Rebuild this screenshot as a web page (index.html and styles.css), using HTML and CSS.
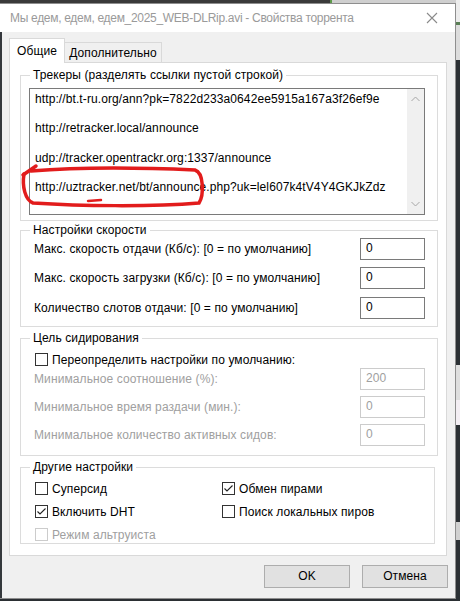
FILE: index.html
```html
<!DOCTYPE html>
<html lang="ru">
<head>
<meta charset="utf-8">
<title>Свойства торрента</title>
<link rel="stylesheet" href="styles.css">
</head>
<body>
<div class="screen">
  <div class="main">
    <div class="topstrip"></div>
    <div class="window">
      <div class="titlebar">
        <span class="title">Мы едем, едем, едем_2025_WEB-DLRip.avi - Свойства торрента</span>
        <svg class="close" width="12" height="12" viewBox="0 0 12 12"><path d="M1 1 L11 11 M11 1 L1 11" stroke="#8a8a8a" stroke-width="1.1" fill="none"/></svg>
      </div>
      <div class="client">
        <div class="tabs">
          <div class="tab active">Общие</div>
          <div class="tab">Дополнительно</div>
        </div>
        <div class="page">
          <fieldset class="group g1">
            <legend>Трекеры (разделять ссылки пустой строкой)</legend>
            <div class="gbody">
              <div class="textarea">
                <div class="tlines">
                  <div>http://bt.t-ru.org/ann?pk=7822d233a0642ee5915a167a3f26ef9e</div>
                  <div>&nbsp;</div>
                  <div>http://retracker.local/announce</div>
                  <div>&nbsp;</div>
                  <div>udp://tracker.opentrackr.org:1337/announce</div>
                  <div>&nbsp;</div>
                  <div>http://uztracker.net/bt/announce.php?uk=lel607k4tV4Y4GKJkZdz</div>
                </div>
                <div class="vscroll">
                  <svg width="9" height="6" viewBox="0 0 9 6"><path d="M0.5 5 L4.5 1 L8.5 5" stroke="#a6a6a6" fill="none"/></svg>
                  <svg width="9" height="6" viewBox="0 0 9 6"><path d="M0.5 1 L4.5 5 L8.5 1" stroke="#a6a6a6" fill="none"/></svg>
                </div>
              </div>
            </div>
          </fieldset>

          <fieldset class="group g2">
            <legend>Настройки скорости</legend>
            <div class="gbody rows">
              <div class="row"><span>Макс. скорость отдачи (Кб/с): [0 = по умолчанию]</span><div class="input">0</div></div>
              <div class="row"><span>Макс. скорость загрузки (Кб/с): [0 = по умолчанию]</span><div class="input">0</div></div>
              <div class="row r3"><span>Количество слотов отдачи: [0 = по умолчанию]</span><div class="input">0</div></div>
            </div>
          </fieldset>

          <fieldset class="group g3">
            <legend>Цель сидирования</legend>
            <div class="gbody rows">
              <label class="check first"><span class="box"></span><span>Переопределить настройки по умолчанию:</span></label>
              <div class="row dis"><span>Минимальное соотношение (%):</span><div class="input">200</div></div>
              <div class="row dis"><span>Минимальное время раздачи (мин.):</span><div class="input">0</div></div>
              <div class="row dis"><span>Минимальное количество активных сидов:</span><div class="input">0</div></div>
            </div>
          </fieldset>

          <fieldset class="group g4">
            <legend>Другие настройки</legend>
            <div class="gbody checks">
              <label class="check"><span class="box"></span><span>Суперсид</span></label>
              <label class="check"><span class="box"><svg width="11" height="11" viewBox="0 0 11 11"><path d="M1.5 5.5 L4 8 L9.5 2.5" stroke="#222" stroke-width="1.1" fill="none"/></svg></span><span>Обмен пирами</span></label>
              <label class="check"><span class="box"><svg width="11" height="11" viewBox="0 0 11 11"><path d="M1.5 5.5 L4 8 L9.5 2.5" stroke="#222" stroke-width="1.1" fill="none"/></svg></span><span>Включить DHT</span></label>
              <label class="check"><span class="box"></span><span>Поиск локальных пиров</span></label>
              <label class="check disabled"><span class="box"></span><span>Режим альтруиста</span></label>
            </div>
          </fieldset>
        </div>
        <div class="buttons">
          <div class="btn">OK</div>
          <div class="btn">Отмена</div>
        </div>
      </div>
    </div>
    <div class="bottomstrip"></div>
  </div>
  <div class="side">
    <div class="s1"></div><div class="s2"></div><div class="s3"></div><div class="s4"></div>
    <div class="s5"></div><div class="s6"></div><div class="s7"></div><div class="s8"></div><div class="s9"></div>
  </div>
  <svg class="annot" width="460" height="601" viewBox="0 0 460 601">
    <path d="M23 175 L36 166" stroke="#e21c1c" stroke-width="3.5" fill="none" stroke-linecap="round"/>
    <path d="M31 171 C80 167 150 168 195 170 C204 173 204 195 199 203 C150 207 80 206 33 203 C25 200 22 186 24 174" stroke="#e21c1c" stroke-width="3.5" fill="none" stroke-linecap="round"/>
    <path d="M88 201 L101 200" stroke="#e21c1c" stroke-width="2.5" fill="none" stroke-linecap="round"/>
  </svg>
</div>
</body>
</html>
```

FILE: styles.css
```css
* { box-sizing: border-box; }
html, body { margin: 0; padding: 0; }
body {
  width: 460px;
  height: 601px;
  overflow: hidden;
  background: #2b3034;
  font-family: "Liberation Sans", Arial, sans-serif;
  font-size: 12px;
  letter-spacing: 0.1px;
  color: #000;
}
.screen { position: relative; display: flex; height: 601px; }
.main { width: 456px; display: flex; flex-direction: column; }
.topstrip {
  height: 3px;
  background: linear-gradient(to right, #3a3a3a 0 330px, #5d9a4a 330px 332px, #cfcfcf 332px);
}
.bottomstrip { flex: 1; background: #2b2f33; }
.window {
  height: 596px;
  background: #f0f0f0;
  border: 1px solid #8e8e8e;
  border-left: none;
  display: flex;
  flex-direction: column;
}
.titlebar {
  height: 28px;
  background: #fff;
  display: flex;
  align-items: center;
  justify-content: space-between;
  padding: 0 17px 0 10px;
  color: #9a9a9a;
}
.title { letter-spacing: -0.3px; }
.close { display: block; }
.client {
  flex: 1;
  border-left: 2px solid #34383c;
  padding: 6px 8px 0 7px;
  display: flex;
  flex-direction: column;
}
.tabs { display: flex; align-items: flex-end; height: 24px; position: relative; z-index: 1; }
.tab {
  height: 20px;
  padding: 0 4px;
  border: 1px solid #d9d9d9;
  border-left: none;
  border-bottom: none;
  background: #f0f0f0;
  line-height: 20px;
  width: 97px;
  text-align: center;
}
.tab.active {
  height: 25px;
  margin-bottom: -1px;
  width: 56px;
  border-left: 1px solid #d9d9d9;
  background: #fff;
  line-height: 25px;
}
.page {
  height: 494px;
  width: 438px;
  background: #fff;
  border: 1px solid #d9d9d9;
  padding: 4px 0 0 10px;
}
.group {
  margin: 0;
  padding: 0;
  border: 1px solid #dcdcdc;
  min-width: 0;
  width: 418px;
}
.group legend {
  margin-left: 9px;
  padding: 0 3px;
  height: 16px;
  line-height: 16px;
}
.gbody { padding: 0 12px 0 13px; }

.g1 .gbody { padding: 5px 12px 5px 8px; }
.textarea {
  height: 127px;
  border: 1px solid #7a7a7a;
  display: flex;
}
.tlines { flex: 1; padding: 3px 0 0 5px; line-height: 14.7px; white-space: nowrap; overflow: hidden; }
.vscroll {
  width: 17px;
  background: #f0f0f0;
  display: flex;
  flex-direction: column;
  justify-content: space-between;
  align-items: center;
  padding: 7px 0 7px;
}
.vscroll svg { display: block; }

.rows { display: flex; flex-direction: column; }
.row { display: flex; align-items: center; justify-content: space-between; height: 22px; }
.input {
  width: 65px;
  height: 22px;
  border: 1px solid #7a7a7a;
  padding-left: 5px;
  line-height: 19px;
  background: #fff;
}
.g2 { margin-top: 1px; }
.g2 .gbody { gap: 7px; padding-bottom: 7px; }
.g2 .row.r3 { margin-top: 1px; }
.g3 { margin-top: 3px; }
.g3 .gbody { padding-bottom: 9px; }
.g3 .row { margin-top: 6px; }
.g3 .check.first + .row { margin-top: 0; }
.dis { color: #a0a0a0; }
.dis .input { border-color: #cccccc; color: #a0a0a0; }

.check { display: flex; align-items: center; height: 17px; gap: 4px; }
.check.first { margin-top: 5px; }
.box {
  width: 13px;
  height: 13px;
  margin-left: 1px;
  border: 1px solid #333;
  background: #fff;
  display: flex;
  align-items: center;
  justify-content: center;
}
.box svg { display: block; }
.check.disabled { color: #a0a0a0; }
.check.disabled .box { border-color: #cccccc; }

.g4 { margin-top: 3px; width: 415px; }
.g4 .gbody {
  display: grid;
  grid-template-columns: 187px 1fr;
  row-gap: 6px;
  padding-top: 5px;
  padding-bottom: 0;
}

.buttons { display: flex; justify-content: flex-end; gap: 12px; margin-top: 9px; margin-right: -1px; }
.btn {
  width: 86px;
  height: 23px;
  background: #e1e1e1;
  border: 1px solid #adadad;
  text-align: center;
  line-height: 21px;
}

.side { width: 4px; display: flex; flex-direction: column; }
.side .s1 { height: 22px; background: #ececec; }
.side .s2 { height: 3px; background: #5a7f56; }
.side .s3 { height: 35px; background: #dcdcdc; }
.side .s4 { height: 305px; background: #2b3034; }
.side .s5 { height: 35px; background: #dedede; }
.side .s6 { height: 25px; background: #f3eef3; }
.side .s7 { height: 97px; background: #2b3034; }
.side .s8 { height: 18px; background: #d0d0d0; }
.side .s9 { flex: 1; background: #2b3034; }

.annot { position: absolute; left: 0; top: 0; pointer-events: none; }
```
